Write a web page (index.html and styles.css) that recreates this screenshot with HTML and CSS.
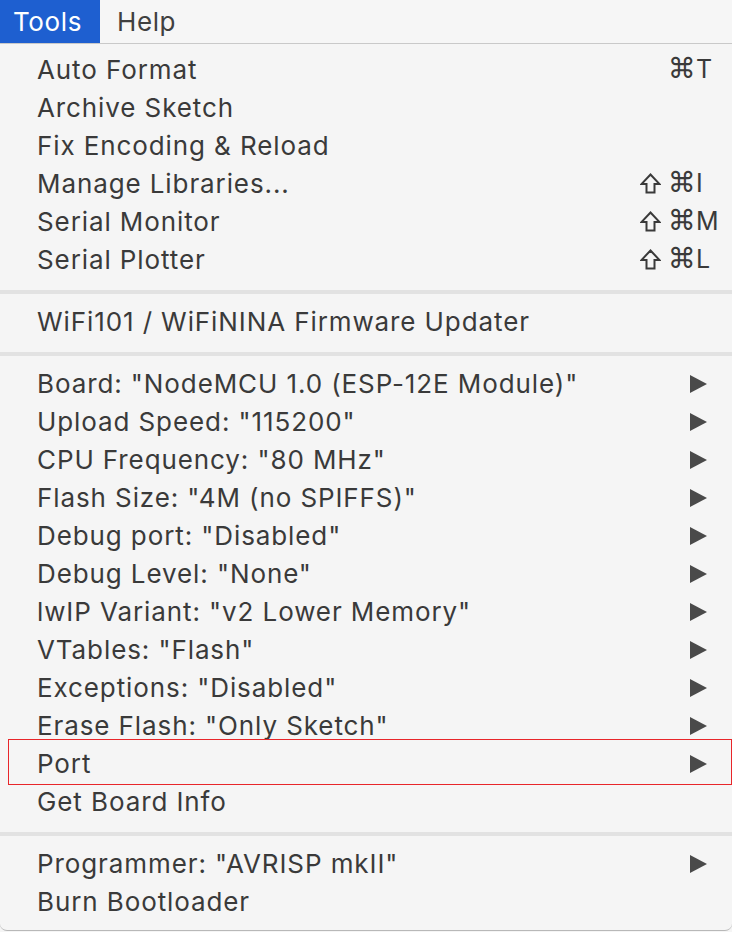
FILE: index.html
```html
<!DOCTYPE html>
<html>
<head>
<meta charset="utf-8">
<link rel="stylesheet" href="styles.css">
</head>
<body>
<div class="menubar">
  <div class="mb-item active">Tools</div>
  <div class="mb-item">Help</div>
</div>
<div class="menu">
  <div class="row"><span class="label">Auto Format</span><span class="kbd"><span class="noshift"></span><span class="cmd">⌘</span>T</span></div>
  <div class="row"><span class="label">Archive Sketch</span></div>
  <div class="row"><span class="label">Fix Encoding &amp; Reload</span></div>
  <div class="row"><span class="label">Manage Libraries...</span><span class="kbd"><svg class="shift" width="21" height="21" viewBox="0 0 21 21"><path d="M10.5 1.5 L19.5 11 H14.5 V19.5 H6.5 V11 H1.5 Z" fill="none" stroke="#3a3a3a" stroke-width="2" stroke-linejoin="miter"/></svg><span class="cmd">⌘</span>I</span></div>
  <div class="row"><span class="label">Serial Monitor</span><span class="kbd"><svg class="shift" width="21" height="21" viewBox="0 0 21 21"><path d="M10.5 1.5 L19.5 11 H14.5 V19.5 H6.5 V11 H1.5 Z" fill="none" stroke="#3a3a3a" stroke-width="2" stroke-linejoin="miter"/></svg><span class="cmd">⌘</span>M</span></div>
  <div class="row"><span class="label">Serial Plotter</span><span class="kbd"><svg class="shift" width="21" height="21" viewBox="0 0 21 21"><path d="M10.5 1.5 L19.5 11 H14.5 V19.5 H6.5 V11 H1.5 Z" fill="none" stroke="#3a3a3a" stroke-width="2" stroke-linejoin="miter"/></svg><span class="cmd">⌘</span>L</span></div>
  <div class="sep"></div>
  <div class="row"><span class="label">WiFi101 / WiFiNINA Firmware Updater</span></div>
  <div class="sep"></div>
  <div class="row"><span class="label">Board: "NodeMCU 1.0 (ESP-12E Module)"</span><span class="arrow"></span></div>
  <div class="row"><span class="label">Upload Speed: "115200"</span><span class="arrow"></span></div>
  <div class="row"><span class="label">CPU Frequency: "80 MHz"</span><span class="arrow"></span></div>
  <div class="row"><span class="label">Flash Size: "4M (no SPIFFS)"</span><span class="arrow"></span></div>
  <div class="row"><span class="label">Debug port: "Disabled"</span><span class="arrow"></span></div>
  <div class="row"><span class="label">Debug Level: "None"</span><span class="arrow"></span></div>
  <div class="row"><span class="label">lwIP Variant: "v2 Lower Memory"</span><span class="arrow"></span></div>
  <div class="row"><span class="label">VTables: "Flash"</span><span class="arrow"></span></div>
  <div class="row"><span class="label">Exceptions: "Disabled"</span><span class="arrow"></span></div>
  <div class="row"><span class="label">Erase Flash: "Only Sketch"</span><span class="arrow"></span></div>
  <div class="row marked"><span class="label">Port</span><span class="arrow"></span></div>
  <div class="row"><span class="label">Get Board Info</span></div>
  <div class="sep"></div>
  <div class="row"><span class="label">Programmer: "AVRISP mkII"</span><span class="arrow"></span></div>
  <div class="row"><span class="label">Burn Bootloader</span></div>
</div>
</body>
</html>
```

FILE: styles.css
```css
html, body {
  margin: 0;
  padding: 0;
  background: #f5f5f5;
  width: 732px;
  height: 932px;
  overflow: hidden;
}
body {
  font-family: Inter, "Liberation Sans", sans-serif;
  color: #3a3a3a;
}
.menubar {
  display: flex;
  height: 43px;
  border-bottom: 1px solid #c9c9c9;
  background: #f6f6f6;
}
.mb-item {
  font-size: 26px;
  line-height: 43px;
  padding: 0 19px 0 17px;
  color: #404040;
  letter-spacing: 0.6px;
}
.mb-item.active {
  background: #1e5fd0;
  color: #fff;
  padding: 0 18px 0 13px;
}
.menu {
  background: #f5f5f5;
  padding: 7px 0 9px;
  border-radius: 0 0 7px 7px;
  border-bottom: 1px solid #b8b8b8;
  box-sizing: border-box;
}
.row {
  position: relative;
  height: 38px;
  display: flex;
  align-items: center;
  justify-content: space-between;
  padding: 0 22px 0 37px;
  font-size: 26px;
  letter-spacing: 0.9px;
}
.label {
  white-space: nowrap;
  margin-top: -1px;
}
.kbd {
  display: flex;
  align-items: center;
  justify-content: flex-start;
  width: 70px;
  font-size: 25px;
  letter-spacing: 0;
  margin-top: -2px;
  white-space: nowrap;
}
.noshift {
  width: 28px;
  flex: none;
}
.shift {
  flex: none;
  margin-right: 7px;
  margin-top: 1px;
}
.cmd {
  font-family: "DejaVu Sans", sans-serif;
  font-size: 28px;
  line-height: 1;
  margin-right: 0;
}
.arrow {
  width: 0;
  height: 0;
  border-top: 9px solid transparent;
  border-bottom: 9px solid transparent;
  border-left: 17px solid #4a4a4a;
  margin-right: 3px;
}
.sep {
  height: 4px;
  background: #e2e2e2;
  margin: 11px 0 9px;
}
.marked::after {
  content: "";
  position: absolute;
  left: 8px;
  right: 0;
  top: -6px;
  bottom: -2px;
  border: 1px solid #e8262a;
}
```
